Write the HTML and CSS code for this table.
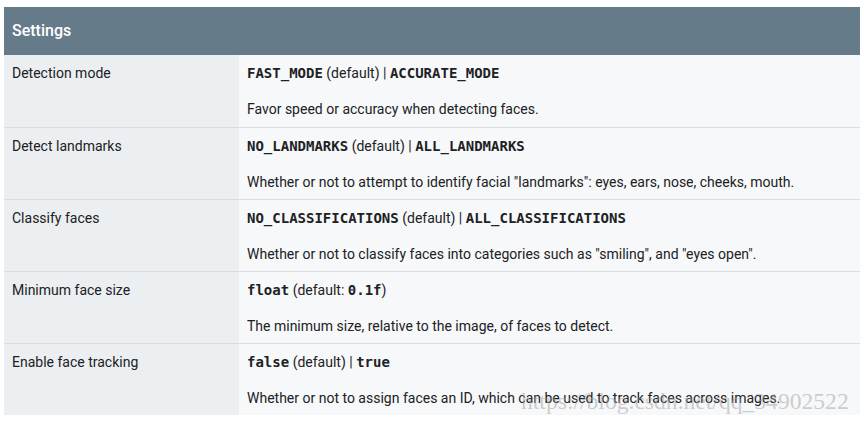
FILE: index.html
```html
<!DOCTYPE html>
<html>
<head>
<meta charset="utf-8">
<link rel="stylesheet" href="styles.css">
</head>
<body>
<div class="wrap">
<table class="settings">
  <thead>
    <tr><th colspan="2">Settings</th></tr>
  </thead>
  <tbody>
    <tr>
      <td class="name">Detection mode</td>
      <td class="desc"><p><code>FAST_MODE</code> (default) | <code>ACCURATE_MODE</code></p><p>Favor speed or accuracy when detecting faces.</p></td>
    </tr>
    <tr>
      <td class="name">Detect landmarks</td>
      <td class="desc"><p><code>NO_LANDMARKS</code> (default) | <code>ALL_LANDMARKS</code></p><p>Whether or not to attempt to identify facial "landmarks": eyes, ears, nose, cheeks, mouth.</p></td>
    </tr>
    <tr>
      <td class="name">Classify faces</td>
      <td class="desc"><p><code>NO_CLASSIFICATIONS</code> (default) | <code>ALL_CLASSIFICATIONS</code></p><p>Whether or not to classify faces into categories such as "smiling", and "eyes open".</p></td>
    </tr>
    <tr>
      <td class="name">Minimum face size</td>
      <td class="desc"><p><code>float</code> (default: <code>0.1f</code>)</p><p>The minimum size, relative to the image, of faces to detect.</p></td>
    </tr>
    <tr>
      <td class="name">Enable face tracking</td>
      <td class="desc"><p><code>false</code> (default) | <code>true</code></p><p>Whether or not to assign faces an ID, which can be used to track faces across images.</p></td>
    </tr>
  </tbody>
</table>
<div class="watermark">https://blog.csdn.net/qq_34902522</div>
</div>
</body>
</html>
```
FILE: styles.css
```css
html, body {
  margin: 0;
  padding: 0;
  background: #ffffff;
}
body {
  font-family: Roboto, "Liberation Sans", sans-serif;
  color: #202124;
}
.wrap {
  position: relative;
  padding: 7px 4px 0 4px;
}
.settings {
  width: 856px;
  border-collapse: collapse;
  font-size: 14px;
  line-height: 20px;
}
.settings th {
  background: #667b89;
  color: #ffffff;
  text-align: left;
  font-weight: 500;
  font-size: 16px;
  height: 48px;
  padding: 0 8px;
  box-sizing: border-box;
}
.settings td {
  vertical-align: top;
  padding: 8px 8px 7px 8px;
  border-top: 1px solid #dadce0;
}
.settings tbody tr:first-child td {
  border-top: none;
  padding-bottom: 8px;
}
.settings td.name {
  width: 219px;
  background: #eceff1;
  color: #202124;
}
.settings td.desc {
  background: #f7f8f9;
  color: #202124;
}
.settings p {
  margin: 0;
}
.settings p + p {
  margin-top: 16px;
}
code {
  font-family: "DejaVu Sans Mono", "Liberation Mono", monospace;
  font-weight: bold;
  font-size: 14px;
  color: #202124;
}
.watermark {
  position: absolute;
  left: 521px;
  top: 388px;
  font-family: "Liberation Serif", serif;
  font-size: 23.6px;
  color: rgba(160, 160, 160, 0.5);
}
```
